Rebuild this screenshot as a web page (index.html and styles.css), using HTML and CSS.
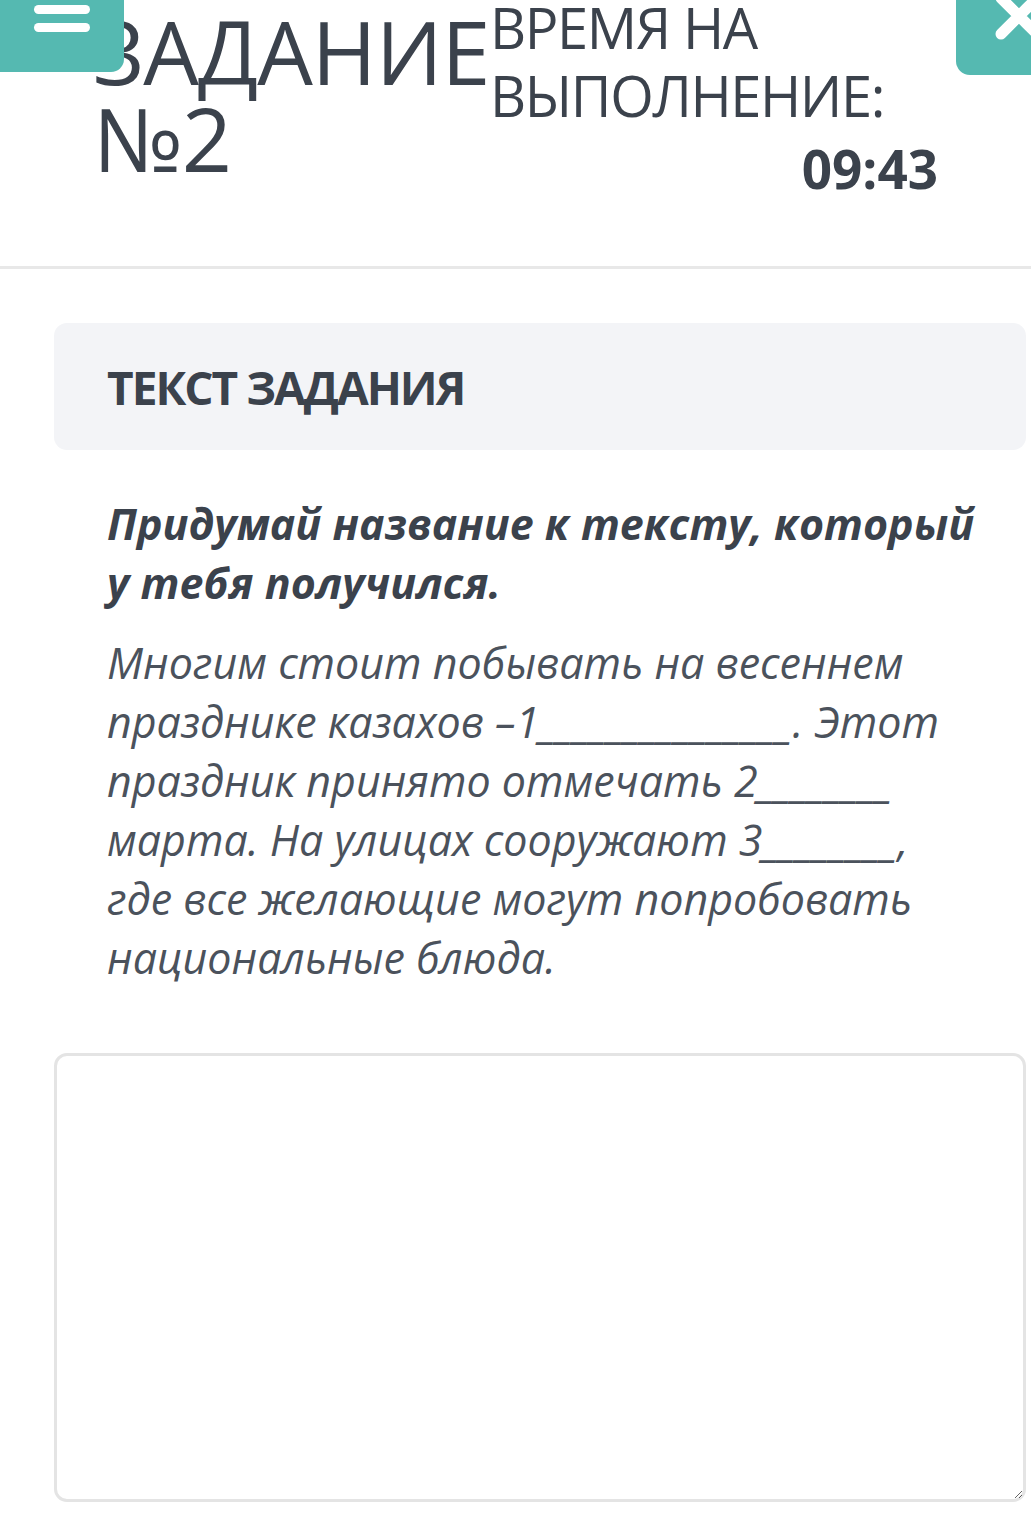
FILE: index.html
```
<!DOCTYPE html>
<html lang="ru">
<head>
<meta charset="utf-8">
<title>Задание №2</title>
<link rel="stylesheet" href="styles.css">
</head>
<body>
<header class="top">
  <button class="menu-btn" aria-label="Меню">
    <svg width="124" height="72" viewBox="0 0 124 72">
      <rect x="34" y="-14" width="56" height="9" rx="4.5" fill="#fff"/>
      <rect x="34" y="5" width="56" height="9" rx="4.5" fill="#fff"/>
      <rect x="34" y="23" width="56" height="9" rx="4.5" fill="#fff"/>
    </svg>
  </button>
  <h1 class="title">ЗАДАНИЕ №2</h1>
  <div class="timer-block">
    <div class="timer-label">ВРЕМЯ НА ВЫПОЛНЕНИЕ:</div>
    <div class="timer">09:43</div>
  </div>
  <button class="close-btn" aria-label="Закрыть">
    <svg width="75" height="75" viewBox="0 0 75 75">
      <path d="M45 -2 L71 24 M45 34 L71 8 M71 24 L97 50 M71 8 L97 -18" stroke="#fff" stroke-width="11" stroke-linecap="round"/>
    </svg>
  </button>
</header>
<main class="content">
  <section class="card">
    <h2 class="card-title">ТЕКСТ ЗАДАНИЯ</h2>
  </section>
  <div class="task">
    <p class="question">Придумай название к тексту, который у тебя получился.</p>
    <p class="body-text">Многим стоит побывать на весеннем празднике казахов –1_______________. Этот праздник принято отмечать 2________ марта. На улицах сооружают 3________, где все желающие могут попробовать национальные блюда.</p>
  </div>
  <textarea class="answer"></textarea>
</main>
</body>
</html>
```
FILE: styles.css
```
* { box-sizing: border-box; }
html, body { margin: 0; padding: 0; background: #fff; }
body {
  font-family: "Open Sans", "Noto Sans", sans-serif;
  color: #3b424c;
  width: 1031px;
  height: 1521px;
  overflow: hidden;
}
.top {
  position: relative;
  height: 269px;
  border-bottom: 3px solid #e8e8e8;
  display: flex;
  align-items: flex-start;
  padding-left: 93px;
}
.menu-btn {
  position: absolute;
  left: 0;
  top: 0;
  width: 124px;
  height: 72px;
  border: 0;
  padding: 0;
  background: #55b9b1;
  border-bottom-right-radius: 13px;
  overflow: hidden;
  z-index: 2;
}
.menu-btn svg, .close-btn svg { display: block; }
.close-btn {
  position: absolute;
  left: 956px;
  top: 0;
  width: 75px;
  height: 75px;
  border: 0;
  padding: 0;
  background: #55b9b1;
  border-bottom-left-radius: 14px;
  overflow: hidden;
}
.title {
  margin: 8px 0 0 0;
  width: 397px;
  flex: none;
  font-size: 88px;
  line-height: 87px;
  font-weight: 400;
  letter-spacing: -1px;
  color: #3b424c;
}
.timer-block {
  width: 448px;
  margin-top: -7px;
  flex: none;
}
.timer-label {
  font-size: 56px;
  line-height: 68px;
  font-weight: 400;
  letter-spacing: -1.4px;
}
.timer {
  margin-top: 6px;
  text-align: right;
  font-size: 53px;
  line-height: 68px;
  font-weight: 700;
}
.content {
  padding: 54px 5px 0 54px;
}
.card {
  height: 127px;
  background: #f3f4f7;
  border-radius: 13px;
  display: flex;
  align-items: center;
  padding: 0 53px;
}
.card-title {
  margin: 0;
  font-size: 46px;
  font-weight: 700;
  font-stretch: 90%;
  letter-spacing: -2px;
}
.task {
  padding: 44px 49px 0 53px;
}
.question {
  margin: 0;
  font-size: 43px;
  line-height: 59px;
  font-weight: 700;
  font-style: italic;
}
.body-text {
  margin: 21px 0 0 0;
  font-size: 43px;
  line-height: 59px;
  font-style: italic;
  color: #4b525c;
}
.answer {
  display: block;
  margin-top: 66px;
  width: 972px;
  height: 449px;
  border: 3px solid #e4e4e4;
  border-radius: 13px;
  background: #fff;
  resize: both;
  font-family: inherit;
}
```
